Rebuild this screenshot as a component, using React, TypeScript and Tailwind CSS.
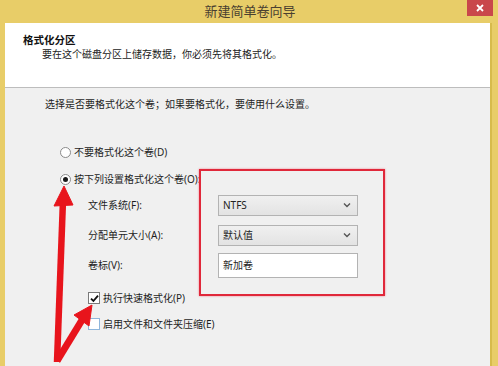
import React from "react";

const font = { fontFamily: '"Noto Sans","Noto Sans CJK SC",sans-serif' };

function Radio({ checked }: { checked?: boolean }) {
  return (
    <span className="w-[11px] h-[11px] rounded-full border border-[#8a8a8a] bg-white flex items-center justify-center shrink-0">
      {checked && <span className="w-[5px] h-[5px] rounded-full bg-[#1a1a1a]" />}
    </span>
  );
}

function Check({ checked }: { checked?: boolean }) {
  return (
    <span
      className={
        "w-[12px] h-[12px] border bg-white flex items-center justify-center shrink-0 " +
        (checked ? "border-[#7a7a7a]" : "border-[#8fb6dc]")
      }
    >
      {checked && (
        <svg width="9" height="9" viewBox="0 0 9 9">
          <path d="M1 4.6 L3.4 7 L8 1.6" fill="none" stroke="#111" strokeWidth="1.8" />
        </svg>
      )}
    </span>
  );
}

function Combo({ value }: { value: string }) {
  return (
    <div className="w-[140px] h-[21px] border border-[#b3b3b3] bg-gradient-to-b from-[#f0f0f0] to-[#e3e3e3] flex items-center justify-between pl-[4px] pr-[6px] text-[#222]">
      <span>{value}</span>
      <svg width="8" height="6" viewBox="0 0 8 6">
        <path d="M1 1.5 L4 4.5 L7 1.5" fill="none" stroke="#555" strokeWidth="1.4" />
      </svg>
    </div>
  );
}

export default function App() {
  return (
    <div
      className="relative w-[498px] h-[366px] overflow-hidden bg-[#e8cd68] flex flex-col text-[10px] text-[#1e1e1e]"
      style={font}
    >
      {/* title bar */}
      <div className="relative h-[23px] flex items-center justify-center shrink-0">
        <span className="text-[13px] text-[#4a4030] pl-[2px]">新建简单卷向导</span>
        <div className="absolute right-[5px] top-0 w-[26px] h-[16px] bg-[#c9474b] flex items-center justify-center">
          <svg width="8" height="8" viewBox="0 0 8 8">
            <path d="M1 1 L7 7 M7 1 L1 7" stroke="#fff" strokeWidth="1.8" />
          </svg>
        </div>
      </div>

      {/* client */}
      <div className="flex-1 ml-[5px] mr-[6px] flex flex-col border-r-[2px] border-[#d7bb4c]">
        <div className="h-[65px] bg-white border-b border-[#bdbdbd] flex flex-col pl-[18px] pt-[10px] shrink-0">
          <div className="font-bold text-[10.5px] leading-[14px] text-[#111]">格式化分区</div>
          <div className="pl-[19px] leading-[14px] text-[#222]">要在这个磁盘分区上储存数据，你必须先将其格式化。</div>
        </div>

        <div className="flex-1 bg-[#f0f0f0] flex flex-col pl-[40px] pt-[6px]">
          <div className="h-[20px] flex items-center">选择是否要格式化这个卷；如果要格式化，要使用什么设置。</div>

          <div className="mt-[28px] h-[20px] flex items-center gap-[3px] pl-[15px]">
            <Radio />
            <span>不要格式化这个卷(D)</span>
          </div>
          <div className="mt-[7px] h-[20px] flex items-center gap-[3px] pl-[15px]">
            <Radio checked />
            <span>按下列设置格式化这个卷(O):</span>
          </div>

          <div className="mt-[6px] h-[20px] flex items-center pl-[43px]">
            <span className="w-[130px]">文件系统(F):</span>
            <Combo value="NTFS" />
          </div>
          <div className="mt-[10px] h-[20px] flex items-center pl-[43px]">
            <span className="w-[130px]">分配单元大小(A):</span>
            <Combo value="默认值" />
          </div>
          <div className="mt-[8px] h-[25px] flex items-center pl-[43px]">
            <span className="w-[130px]">卷标(V):</span>
            <div className="w-[140px] h-[25px] border border-[#b3b3b3] bg-white flex items-center pl-[4px]">新加卷</div>
          </div>

          <div className="mt-[10px] h-[20px] flex items-center gap-[3px] pl-[43px]">
            <Check checked />
            <span>执行快速格式化(P)</span>
          </div>
          <div className="mt-[6px] h-[20px] flex items-center gap-[3px] pl-[43px]">
            <Check />
            <span>启用文件和文件夹压缩(E)</span>
          </div>
        </div>
      </div>

      {/* annotation: red box */}
      <div className="absolute left-[199px] top-[169px] w-[186px] h-[127px] border-2 border-[#e0283a] shadow-[0_0_2px_#f08090]" />

      {/* annotation: arrows */}
      <svg className="absolute left-0 top-0 pointer-events-none" width="498" height="366" viewBox="0 0 498 366">
        <path d="M57 362 L63 200" stroke="#e8141c" strokeWidth="6.5" fill="none" />
        <path d="M64 186 L54 206 L73 205 Z" fill="#e8141c" stroke="#e8141c" strokeWidth="1" strokeLinejoin="round" />
        <path d="M57 361 L82 320" stroke="#e8141c" strokeWidth="7" fill="none" />
        <path d="M92 305 L74 315 L89 326 Z" fill="#e8141c" stroke="#e8141c" strokeWidth="1" strokeLinejoin="round" />
      </svg>
    </div>
  );
}
